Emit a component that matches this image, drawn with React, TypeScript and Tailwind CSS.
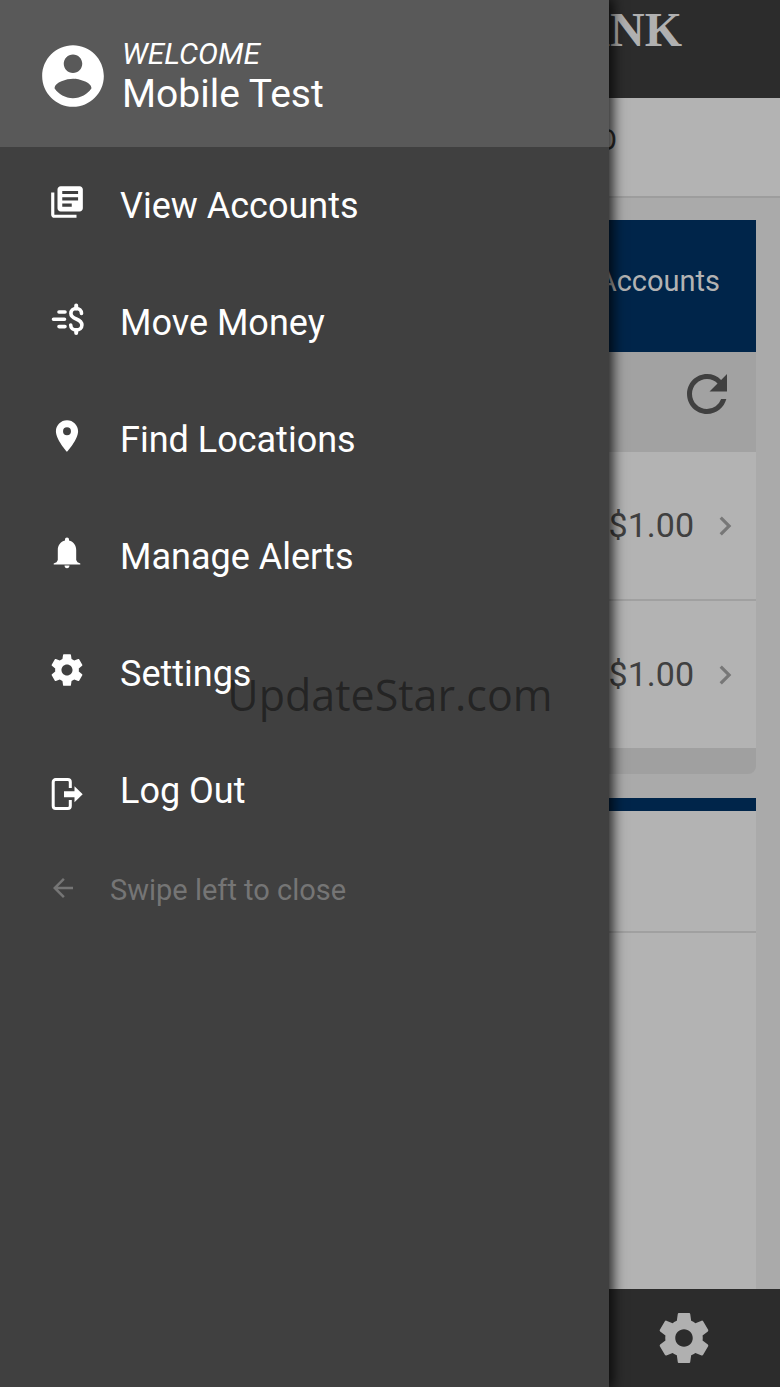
import type { ReactNode } from "react";
import {
    MdArrowBack,
    MdChevronRight,
    MdLibraryBooks,
    MdPlace,
    MdRefresh,
} from "react-icons/md";

interface IconProps {
    className?: string;
}

interface MenuItem {
    label: string;
    icon: ReactNode;
}

function GearIcon({ className }: IconProps) {
    return (
        <svg viewBox="0 0 24 24" fill="currentColor" className={className} aria-hidden="true">
            <path d="M19.43 12.98c.04-.32.07-.64.07-.98s-.03-.66-.07-.98l2.11-1.65c.19-.15.24-.42.12-.64l-2-3.46c-.12-.22-.39-.3-.61-.22l-2.49 1c-.52-.4-1.08-.73-1.69-.98l-.38-2.65C14.46 2.18 14.25 2 14 2h-4c-.25 0-.46.18-.49.42l-.38 2.65c-.61.25-1.17.59-1.69.98l-2.49-1c-.23-.09-.49 0-.61.22l-2 3.46c-.13.22-.07.49.12.64l2.11 1.65c-.04.32-.07.65-.07.98s.03.66.07.98l-2.11 1.65c-.19.15-.24.42-.12.64l2 3.46c.12.22.39.3.61.22l2.49-1c.52.4 1.08.73 1.69.98l.38 2.65c.03.24.24.42.49.42h4c.25 0 .46-.18.49-.42l.38-2.65c.61-.25 1.17-.59 1.69-.98l2.49 1c.23.09.49 0 .61-.22l2-3.46c.12-.22.07-.49-.12-.64l-2.11-1.65zM12 15.5c-1.93 0-3.5-1.57-3.5-3.5s1.57-3.5 3.5-3.5 3.5 1.57 3.5 3.5-1.57 3.5-3.5 3.5z" />
        </svg>
    );
}

function AvatarIcon({ className }: IconProps) {
    return (
        <svg viewBox="0 0 24 24" fill="currentColor" className={className} aria-hidden="true">
            <path d="M12 2C6.48 2 2 6.48 2 12s4.48 10 10 10 10-4.48 10-10S17.52 2 12 2zm0 3c1.66 0 3 1.34 3 3s-1.34 3-3 3-3-1.34-3-3 1.34-3 3-3zm0 14.2c-2.5 0-4.71-1.28-6-3.22.03-1.99 4-3.08 6-3.08 1.99 0 5.97 1.09 6 3.08-1.29 1.94-3.5 3.22-6 3.22z" />
        </svg>
    );
}

function MoveMoneyIcon({ className }: IconProps) {
    return (
        <svg
            viewBox="0 0 38 38"
            fill="none"
            stroke="currentColor"
            strokeWidth="3.6"
            strokeLinecap="round"
            className={className}
            aria-hidden="true"
        >
            <path d="M11 12h6M5.500 19.300h11M11 26.600h6" />
            <path d="M28.200 5.500v3M28.200 30v3" strokeWidth="4" />
            <path d="M33.500 13.500c0-3-2.200-5-5.300-5s-5.300 1.900-5.300 4.900c0 6.700 11 4.500 11 11.600 0 3-2.400 5-5.600 5s-5.600-2-5.600-5" />
        </svg>
    );
}

function BellIcon({ className }: IconProps) {
    return (
        <svg viewBox="0 0 38 38" fill="currentColor" className={className} aria-hidden="true">
            <path d="M19 3.500c1.200 0 2 .8 2 2v1.100c4.500 1 7.200 4.900 7.200 9.400v10l1.300 2.200 2.800 1.400v.9H5.700v-.9l2.800-1.400L9.800 26V16c0-4.500 2.700-8.400 7.200-9.400V5.500c0-1.200.8-2 2-2zM16.500 31.600h5c0 1.600-1 2.700-2.500 2.700s-2.500-1.100-2.500-2.700z" />
        </svg>
    );
}

function LogOutIcon({ className }: IconProps) {
    return (
        <svg viewBox="0 -7 38 38" className={className} aria-hidden="true">
            <path
                d="M22.300 13V7a2.500 2.500 0 0 0-2.500-2.500H7.700A2.500 2.500 0 0 0 5.200 7v24a2.500 2.500 0 0 0 2.500 2.500h12.100a2.500 2.500 0 0 0 2.500-2.500v-6"
                fill="none"
                stroke="currentColor"
                strokeWidth="3"
            />
            <path d="M16 16.200h10.500v-5L34.700 19.200l-8.200 8v-5H16z" fill="currentColor" />
        </svg>
    );
}

const menuItems: MenuItem[] = [
    { label: "View Accounts", icon: <MdLibraryBooks className="size-[38px]" /> },
    { label: "Move Money", icon: <MoveMoneyIcon className="size-[38px]" /> },
    { label: "Find Locations", icon: <MdPlace className="size-[38px]" /> },
    { label: "Manage Alerts", icon: <BellIcon className="size-[38px]" /> },
    { label: "Settings", icon: <GearIcon className="size-[38px]" /> },
    { label: "Log Out", icon: <LogOutIcon className="size-[38px] overflow-visible" /> },
];

const balances = ["$1.00", "$1.00"];

function AccountsPage() {
    return (
        <div className="flex min-h-screen flex-col bg-[#aaaaaa]">
            <header className="flex h-[98px] justify-end bg-[#2c2c2c] pt-1.5 pr-[98px]">
                <span className="font-['Liberation_Serif',serif] text-5xl font-bold text-[#b0b0b0]">
                    BANK
                </span>
            </header>
            <div className="flex h-[100px] items-center justify-end border-b-2 border-[#9d9d9d] bg-[#b3b3b3] pr-[163px] pb-3 text-[29px] text-[#2c2c2c]">
                O
            </div>

            <main className="flex grow flex-col px-6 pt-[22px]">
                <section>
                    <div className="flex h-[132px] items-center justify-end bg-[#00254a] pr-9 pb-2 text-[29px] text-[#b3b3b3]">
                        Accounts
                    </div>
                    <div className="flex h-[100px] justify-end bg-[#a2a2a2] pt-3 pr-[19px]">
                        <button type="button" aria-label="Refresh" className="h-[60px]">
                            <MdRefresh className="size-[60px] text-[#404040]" />
                        </button>
                    </div>
                    <ul>
                        {balances.map((balance, index) => (
                            <li key={index} className="border-b-2 border-[#a0a0a0] bg-[#b3b3b3]">
                                <a
                                    href="#"
                                    className="flex h-[147px] items-center justify-end gap-3 pr-3 text-[34px] text-[#404040]"
                                >
                                    {balance}
                                    <MdChevronRight className="size-[38px] text-[#777777]" />
                                </a>
                            </li>
                        ))}
                    </ul>
                    <div className="h-6 rounded-b-lg bg-[#a0a0a0]" />
                </section>

                <section className="mt-6 flex grow flex-col border-t-[13px] border-[#00254a] bg-[#b3b3b3]">
                    <div className="h-[122px] border-b-2 border-[#a0a0a0]" />
                </section>
            </main>

            <footer className="flex h-[98px] items-center justify-end bg-[#2c2c2c] pr-[66px]">
                <button type="button" aria-label="Open settings">
                    <GearIcon className="size-[60px] text-[#b0b0b0]" />
                </button>
            </footer>
        </div>
    );
}

function Drawer() {
    return (
        <aside className="absolute inset-y-0 left-0 right-[171px] bg-[#404040] text-white shadow-[2px_0_12px_2px_rgba(0,0,0,0.8)]">
            <div className="flex h-[147px] items-center gap-3 bg-[#595959] pt-1 pl-9">
                <AvatarIcon className="size-[74px]" />
                <div className="pb-1">
                    <p className="text-[30px] leading-10 italic">WELCOME</p>
                    <p className="text-[39px] leading-10">Mobile Test</p>
                </div>
            </div>

            <nav>
                <ul>
                    {menuItems.map((item) => (
                        <li key={item.label}>
                            <a href="#" className="flex h-[117px] items-center gap-[34px] pl-12 text-4xl">
                                <span className="mb-2">{item.icon}</span>
                                {item.label}
                            </a>
                        </li>
                    ))}
                </ul>
            </nav>

            <p className="flex h-[84px] items-center gap-8 pl-12 text-[29px] text-[#757575]">
                <MdArrowBack className="mb-1.5 size-[30px]" />
                Swipe left to close
            </p>
        </aside>
    );
}

export default function App() {
    return (
        <div className="relative overflow-hidden font-[Roboto,sans-serif]">
            <AccountsPage />
            <Drawer />
            <div className="pointer-events-none absolute inset-0 flex items-center justify-center pt-1 font-['Open_Sans',sans-serif] text-[43px] text-black/45">
                UpdateStar.com
            </div>
        </div>
    );
}
